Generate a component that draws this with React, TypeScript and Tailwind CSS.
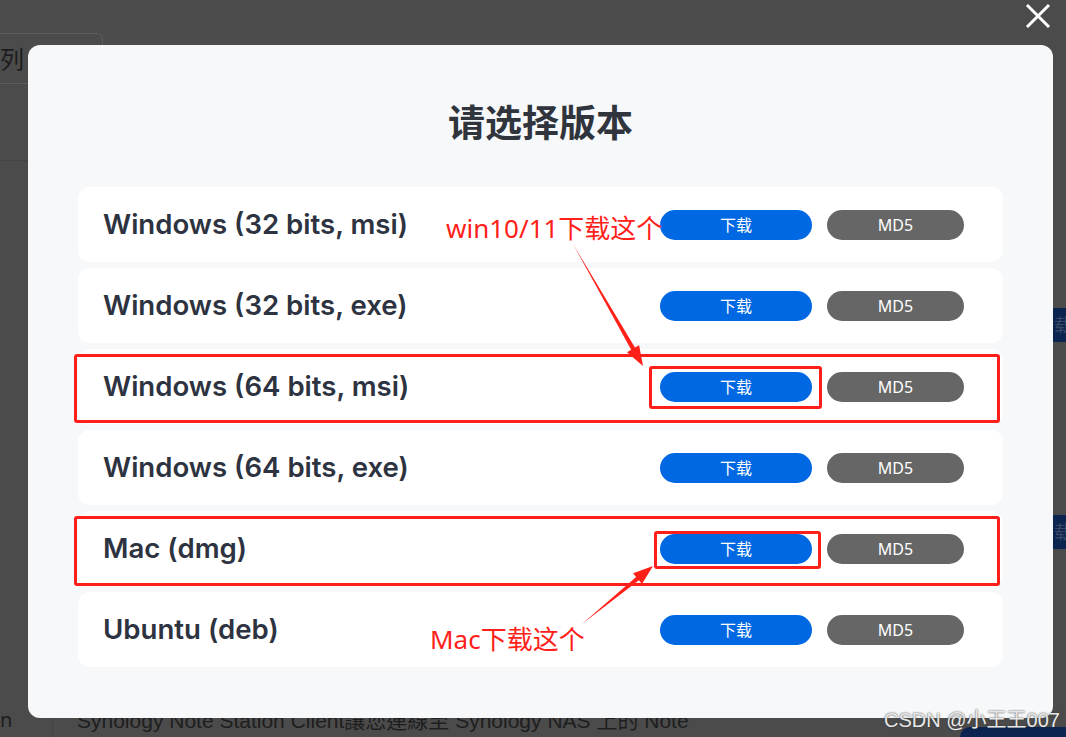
const versions = [
  "Windows (32 bits, msi)",
  "Windows (32 bits, exe)",
  "Windows (64 bits, msi)",
  "Windows (64 bits, exe)",
  "Mac (dmg)",
  "Ubuntu (deb)",
];

function Arrow({ x1, y1, x2, y2 }: { x1: number; y1: number; x2: number; y2: number }) {
  // tapered shaft with a filled head, like a screenshot-tool arrow
  const dx = x2 - x1;
  const dy = y2 - y1;
  const len = Math.hypot(dx, dy);
  const ux = dx / len;
  const uy = dy / len;
  const px = -uy;
  const py = ux;
  const headLen = 20;
  const headW = 7;
  const shaftW = 2.2;
  const bx = x2 - ux * headLen;
  const by = y2 - uy * headLen;
  const pts = [
    [x1, y1],
    [bx + px * shaftW, by + py * shaftW],
    [bx + px * headW, by + py * headW],
    [x2, y2],
    [bx - px * headW, by - py * headW],
    [bx - px * shaftW, by - py * shaftW],
  ]
    .map((p) => p.join(","))
    .join(" ");
  return <polygon points={pts} fill="#ff2119" />;
}

function VersionRow({ label }: { label: string }) {
  return (
    <div className="flex h-[75px] items-center justify-between rounded-xl bg-white pl-[25px] pr-[39px]">
      <span className="text-[27.6px] font-semibold text-[#2d3340]" style={{ fontFamily: "Inter, 'Noto Sans', sans-serif" }}>
        {label}
      </span>
      <div className="flex items-center gap-[15px]">
        <button className="flex h-[30px] w-[152px] items-center justify-center rounded-full bg-[#0068e3] text-[16px] text-white">
          下载
        </button>
        <button className="flex h-[30px] w-[137px] items-center justify-center rounded-full bg-[#666666] text-[16px] text-white">
          MD5
        </button>
      </div>
    </div>
  );
}

function SideTab({ className }: { className: string }) {
  return (
    <div className={`flex h-[34px] w-[13px] items-center overflow-hidden bg-[#0b2550] text-[18px] text-[#3a4a66] ${className}`}>
      <span className="pl-[1px]">载</span>
    </div>
  );
}

export default function App() {
  return (
    <div
      className="relative h-[737px] w-[1066px] overflow-hidden bg-[#4b4b4b]"
      style={{ fontFamily: "'Noto Sans', 'Noto Sans CJK SC', sans-serif" }}
    >
      {/* dimmed page behind the dialog */}
      <div className="flex h-full flex-col">
        <div className="h-[33px]" />
        <div className="flex h-[51px] w-[103px] items-center rounded-tr-md border border-l-0 border-[#5c5c5c] text-[24px] text-[#1c1c1c]">
          列
        </div>
        <div className="mt-[76px] h-px w-[28px] bg-[#444]" />
        <div className="flex flex-1 flex-col items-end gap-[173px] pt-[147px]">
          <SideTab className="" />
          <SideTab className="" />
        </div>
        <div className="flex h-[37px] items-end">
          <div className="flex h-full w-[53px] items-end border-r border-[#444] pb-[2px] text-[20px] text-[#1e1e1e]">n</div>
          <div
            className="ml-[24px] whitespace-nowrap pb-[1px] text-[21px] leading-[30px] text-[#1e1e1e]"
            style={{ fontFamily: "'Liberation Sans', 'Noto Sans CJK TC', sans-serif" }}
          >
            Synology Note Station Client讓您連線至 Synology NAS 上的 Note
          </div>
          <div className="ml-auto h-[10px] w-[106px] self-end rounded-tl-xl bg-[#0b2550]" />
        </div>
      </div>

      {/* close */}
      <svg className="absolute left-[1022px] top-[0px]" width="32" height="32" viewBox="0 0 32 32">
        <path d="M5 5 L27 27 M27 5 L5 27" stroke="#ffffff" strokeWidth="3" strokeLinecap="butt" />
      </svg>

      {/* dialog */}
      <div className="absolute inset-0 pl-[28px] pt-[45px]">
        <div className="flex h-[673px] w-[1025px] flex-col rounded-xl bg-[#f7f8fa] px-[50px] pt-[50px]">
          <h1
            className="text-center text-[37px] font-bold leading-[52px] text-[#30343c]"
            style={{ fontFamily: "'Noto Sans CJK SC', sans-serif" }}
          >
            请选择版本
          </h1>
          <div className="mt-[40px] flex flex-col gap-[6px]">
            {versions.map((v) => (
              <VersionRow key={v} label={v} />
            ))}
          </div>
        </div>
      </div>

      {/* annotations */}
      <div className="pointer-events-none absolute left-[74px] top-[354px] h-[69px] w-[926px] rounded-[3px] border-[3px] border-[#ff1f1a]" />
      <div className="pointer-events-none absolute left-[649px] top-[366px] h-[43px] w-[173px] rounded-[3px] border-[3px] border-[#ff1f1a]" />
      <div className="pointer-events-none absolute left-[74px] top-[516px] h-[70px] w-[926px] rounded-[3px] border-[3px] border-[#ff1f1a]" />
      <div className="pointer-events-none absolute left-[654px] top-[531px] h-[38px] w-[167px] rounded-[3px] border-[3px] border-[#ff1f1a]" />

      <div
        className="absolute left-[446px] top-[210px] whitespace-nowrap text-[26px] leading-[36px] text-[#ff2119]"
        style={{ fontFamily: "'Noto Sans', 'Noto Sans CJK SC', sans-serif" }}
      >
        win10/11下载这个
      </div>
      <div
        className="absolute left-[430px] top-[621px] whitespace-nowrap text-[26px] leading-[36px] text-[#ff2119]"
        style={{ fontFamily: "'Noto Sans', 'Noto Sans CJK SC', sans-serif" }}
      >
        Mac下载这个
      </div>

      <svg className="pointer-events-none absolute left-0 top-0" width="1066" height="737">
        <Arrow x1={573} y1={244} x2={643} y2={366} />
        <Arrow x1={582} y1={624} x2={653} y2={566} />
      </svg>

      {/* watermark */}
      <div
        className="absolute left-[884px] top-[705px] whitespace-nowrap text-[20px] text-[#e8e8e8]"
        style={{ fontFamily: "'Liberation Sans', 'Noto Sans CJK SC', sans-serif", textShadow: "0 0 2px #333" }}
      >
        CSDN @小王王007
      </div>
    </div>
  );
}
